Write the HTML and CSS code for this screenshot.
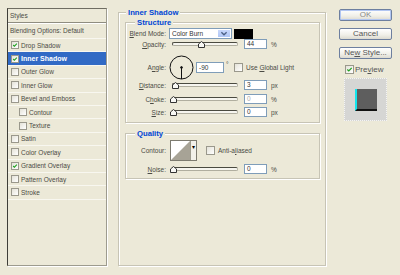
FILE: index.html
```html
<!DOCTYPE html>
<html lang="en">
<head>
  <meta charset="UTF-8">
  <title>Layer Style | Inner Shadow</title>
  <link rel="stylesheet" href="styles.css">
</head>
<body>
  <div class="dialog">
    <!-- 左侧样式列表 -->
    <div class="styles_list">
      <div class="styles_head">Styles</div>
      <div class="styles_blend">Blending Options: Default</div>
      <div class="styles_item"><span class="check on"><svg viewBox="0 0 8 8"><path d="M1.5 4 L3.2 5.6 L6.5 2.2"/></svg></span>Drop Shadow</div>
      <div class="styles_item selected"><span class="check on"><svg viewBox="0 0 8 8"><path d="M1.5 4 L3.2 5.6 L6.5 2.2"/></svg></span>Inner Shadow</div>
      <div class="styles_item"><span class="check"></span>Outer Glow</div>
      <div class="styles_item"><span class="check"></span>Inner Glow</div>
      <div class="styles_item"><span class="check"></span>Bevel and Emboss</div>
      <div class="styles_item sub"><span class="check"></span>Contour</div>
      <div class="styles_item sub"><span class="check"></span>Texture</div>
      <div class="styles_item"><span class="check"></span>Satin</div>
      <div class="styles_item"><span class="check"></span>Color Overlay</div>
      <div class="styles_item"><span class="check on"><svg viewBox="0 0 8 8"><path d="M1.5 4 L3.2 5.6 L6.5 2.2"/></svg></span>Gradient Overlay</div>
      <div class="styles_item"><span class="check"></span>Pattern Overlay</div>
      <div class="styles_item"><span class="check"></span>Stroke</div>
    </div>

    <!-- 中间参数面板 -->
    <div class="effect_panel">
      <div class="group_title">Inner Shadow</div>

      <div class="group structure">
        <div class="group_title sub_title">Structure</div>
        <div class="row row_blend">
          <span class="label"><u>B</u>lend Mode:</span>
          <div class="select">
            <span class="select_text">Color Burn</span>
            <span class="select_btn"><svg viewBox="0 0 10 8"><path d="M2 2.5 L5 5.5 L8 2.5"/></svg></span>
          </div>
          <span class="swatch"></span>
        </div>
        <div class="row">
          <span class="label"><u>O</u>pacity:</span>
          <div class="slider"><span class="thumb" style="left: 44%"><svg viewBox="0 0 7 7"><path d="M0.5 6.5 V3 L3.5 0.5 L6.5 3 V6.5 Z"/></svg></span></div>
          <span class="field">44</span>
          <span class="unit">%</span>
        </div>
        <div class="row row_angle">
          <span class="label">A<u>n</u>gle:</span>
          <svg class="dial" viewBox="0 0 25 25">
            <circle cx="12.5" cy="12.5" r="11.5"/>
            <line x1="12.5" y1="12.5" x2="12.5" y2="24"/>
            <circle class="dial_dot" cx="12.5" cy="12.5" r="0.9"/>
          </svg>
          <span class="field field_angle">-90</span>
          <span class="degree">°</span>
          <span class="check"></span>
          <span class="check_text">Use <u>G</u>lobal Light</span>
        </div>
        <div class="row">
          <span class="label"><u>D</u>istance:</span>
          <div class="slider"><span class="thumb" style="left: 3%"><svg viewBox="0 0 7 7"><path d="M0.5 6.5 V3 L3.5 0.5 L6.5 3 V6.5 Z"/></svg></span></div>
          <span class="field">3</span>
          <span class="unit">px</span>
        </div>
        <div class="row row_choke">
          <span class="label">C<u>h</u>oke:</span>
          <div class="slider"><span class="thumb" style="left: 0%"><svg viewBox="0 0 7 7"><path d="M0.5 6.5 V3 L3.5 0.5 L6.5 3 V6.5 Z"/></svg></span></div>
          <span class="field dim">0</span>
          <span class="unit">%</span>
        </div>
        <div class="row row_size">
          <span class="label"><u>S</u>ize:</span>
          <div class="slider"><span class="thumb" style="left: 0%"><svg viewBox="0 0 7 7"><path d="M0.5 6.5 V3 L3.5 0.5 L6.5 3 V6.5 Z"/></svg></span></div>
          <span class="field">0</span>
          <span class="unit">px</span>
        </div>
      </div>

      <div class="group quality">
        <div class="group_title sub_title">Quality</div>
        <div class="row row_contour">
          <span class="label">Contour:</span>
          <div class="contour">
            <svg class="contour_curve" viewBox="0 0 20 19" preserveAspectRatio="none"><path d="M0 19 L20 0 L20 19 Z"/></svg>
            <span class="contour_btn">▾</span>
          </div>
          <span class="check check_aa"></span>
          <span class="check_text">Anti-a<u>l</u>iased</span>
        </div>
        <div class="row row_noise">
          <span class="label"><u>N</u>oise:</span>
          <div class="slider"><span class="thumb" style="left: 0%"><svg viewBox="0 0 7 7"><path d="M0.5 6.5 V3 L3.5 0.5 L6.5 3 V6.5 Z"/></svg></span></div>
          <span class="field">0</span>
          <span class="unit">%</span>
        </div>
      </div>
    </div>

    <!-- 右侧按钮 -->
    <div class="side">
      <div class="btn btn_default">OK</div>
      <div class="btn">Cancel</div>
      <div class="btn">Ne<u>w</u> Style...</div>
      <div class="preview_row">
        <span class="check on"><svg viewBox="0 0 8 8"><path d="M1.5 4 L3.2 5.6 L6.5 2.2"/></svg></span>
        <span>Pre<u>v</u>iew</span>
      </div>
      <div class="preview_box"><span class="preview_square"></span></div>
    </div>
  </div>
</body>
</html>
```

FILE: styles.css
```css
body {
  margin: 0;
  width: 400px;
  height: 275px;
  overflow: hidden;
  background-color: #ece9d8;
  font-family: "Liberation Sans", Arial, sans-serif;
  font-size: 6.5px;
  color: #4a4a44;
}
u {
  text-decoration-thickness: 0.5px;
  text-underline-offset: 1px;
}
.dialog {
  display: flex;
  align-items: flex-start;
  padding: 8px 0 0 7px;
}

/* 样式列表 */
.styles_list {
  box-sizing: border-box;
  width: 100px;
  height: 258px;
  border: 1px solid;
  border-color: #6f6d62 #9d9b8e #9d9b8e #3f3e38;
  box-shadow: 1px 1px 0 #fff;
}
.styles_head {
  height: 13px;
  line-height: 13px;
  padding-left: 2px;
  border-bottom: 1px solid #8f8d80;
}
.styles_blend {
  height: 14px;
  line-height: 14px;
  padding-left: 2px;
  border-top: 1px solid #fff;
  border-bottom: 1px solid #f8f7f0;
}
.styles_item {
  display: flex;
  align-items: center;
  height: 12.4px;
  padding-left: 3px;
  border-bottom: 1px solid #f8f7f0;
}
.styles_item.sub {
  padding-left: 11px;
}
.styles_item.selected {
  background-color: #316ac5;
  color: #fff;
  font-weight: bold;
  font-size: 7px;
}

/* 复选框 */
.check {
  box-sizing: border-box;
  display: inline-flex;
  flex: none;
  width: 8px;
  height: 8px;
  margin-right: 2px;
  border: 1px solid #9a988c;
  background: linear-gradient(135deg, #e4e2d8, #fff);
}
.check svg {
  width: 100%;
  height: 100%;
}
.check svg path {
  fill: none;
  stroke: #21a121;
  stroke-width: 1.4;
}

/* 参数面板 */
.effect_panel {
  box-sizing: border-box;
  width: 208px;
  height: 254px;
  margin: 4px 0 0 11px;
  padding: 0 5px 0 6px;
  border: 1px solid #c7c4b5;
  box-shadow: inset 1px 1px 0 #fff, 1px 1px 0 #fff;
}
.group_title {
  width: max-content;
  height: 9px;
  line-height: 9px;
  margin: -5px 0 0 1px;
  padding: 0 2px;
  background-color: #ece9d8;
  color: #0046d5;
  font-weight: bold;
  font-size: 7.7px;
}
.sub_title {
  margin-left: 9px;
}
.group {
  box-sizing: border-box;
  width: 195px;
  border: 1px solid #c7c4b5;
  box-shadow: inset 1px 1px 0 #fff, 1px 1px 0 #fff;
}
.structure {
  height: 101px;
  margin-top: 5px;
}
.quality {
  height: 46px;
  margin-top: 10px;
}
.row {
  display: flex;
  align-items: center;
  height: 10px;
}
.row_blend {
  height: 11px;
  margin-top: 1px;
}
.row_angle {
  height: 25px;
  margin-top: 6px;
}
.row_choke {
  margin-top: 4px;
}
.row_size {
  margin-top: 3px;
}
.row_contour {
  height: 21px;
  margin-top: 2px;
}
.row_noise {
  margin-top: 3px;
}
.label {
  flex: none;
  width: 40px;
  text-align: right;
}

/* 下拉框 */
.select {
  box-sizing: border-box;
  display: flex;
  width: 63px;
  height: 11px;
  margin-left: 3px;
  border: 1px solid #7f9db9;
  background-color: #fff;
}
.select_text {
  flex: 1;
  padding-left: 2px;
  line-height: 9px;
  color: #333;
}
.select_btn {
  width: 12px;
  border: 1px solid #fff;
  border-radius: 1px;
  background: linear-gradient(#c8d8fb, #b0c6f5);
}
.select_btn svg {
  display: block;
  width: 100%;
  height: 100%;
}
.select_btn path {
  fill: none;
  stroke: #4d6185;
  stroke-width: 1.5;
}
.swatch {
  width: 19px;
  height: 10px;
  margin-left: 2px;
  background-color: #000;
}

/* 滑块 */
.slider {
  position: relative;
  box-sizing: border-box;
  width: 66px;
  height: 4px;
  margin: 0 0 1px 6px;
  border: 1px solid;
  border-color: #4a4a40 #b0ae9f #b0ae9f #4a4a40;
  border-radius: 2px;
  background-color: #f6f5ef;
}
.thumb {
  position: absolute;
  top: -2px;
  width: 7px;
  height: 7px;
  margin-left: -3px;
}
.thumb svg {
  display: block;
  width: 7px;
  height: 7px;
}
.thumb path {
  fill: #f8f8f4;
  stroke: #333;
  stroke-width: 1;
}
.field {
  box-sizing: border-box;
  width: 23px;
  height: 10px;
  margin-left: 6px;
  padding-left: 2px;
  line-height: 8px;
  border: 1px solid #7f9db9;
  background-color: #fff;
  color: #333;
}
.field.dim {
  color: #aaa;
}
.unit {
  margin-left: 4px;
}

/* 角度 */
.dial {
  width: 25px;
  height: 25px;
  margin-left: 3px;
}
.dial circle,
.dial line {
  fill: none;
  stroke: #111;
  stroke-width: 1;
}
.dial .dial_dot {
  fill: #111;
}
.field_angle {
  width: 28px;
  height: 11px;
  margin-left: 2px;
  line-height: 9px;
}
.degree {
  align-self: flex-start;
  width: 4px;
  margin: 6px 0 0 2px;
}
.row_angle .check {
  width: 9px;
  height: 9px;
  margin-left: 4px;
}
.check_text {
  margin-left: 1px;
}

/* 等高线 */
.contour {
  box-sizing: border-box;
  display: flex;
  width: 27px;
  height: 21px;
  margin-left: 4px;
  border: 1px solid #7d7b70;
  background-color: #fff;
}
.contour_curve {
  width: 19px;
  height: 19px;
}
.contour_curve path {
  fill: #a7a396;
}
.contour_btn {
  flex: 1;
  border-left: 1px solid #9d9b8e;
  background-color: #f2f1ea;
  font-size: 6px;
  line-height: 13px;
  text-align: center;
  color: #000;
}
.check_aa {
  width: 9px;
  height: 9px;
  margin-left: 9px;
}

/* 按钮 */
.side {
  display: flex;
  flex-direction: column;
  width: 53px;
  margin-left: 13px;
  font-size: 8px;
  color: #555;
}
.btn {
  box-sizing: border-box;
  height: 12px;
  margin-top: 7px;
  line-height: 10px;
  text-align: center;
  border: 1px solid #6d7f9f;
  border-radius: 2px;
  background: linear-gradient(#fff, #f0efe8 60%, #dcdad0);
}
.btn_default {
  margin-top: 1px;
  box-shadow: inset 0 0 0 1px #b2c6f2;
  color: #888;
}
.preview_row {
  display: flex;
  align-items: center;
  height: 10px;
  margin: 5px 0 0 6px;
}
.preview_row .check {
  width: 9px;
  height: 9px;
  margin-right: 1px;
}
.preview_box {
  box-sizing: border-box;
  display: flex;
  align-items: center;
  justify-content: center;
  width: 43px;
  height: 43px;
  margin: 4px 0 0 5px;
  border: 1px dotted #f4f4f4;
  background-color: #d6d6d4;
}
.preview_square {
  box-sizing: border-box;
  width: 22px;
  height: 22px;
  border-left: 2px solid #12e6ee;
  border-bottom: 2px solid #111;
  background-color: #5e5e5e;
}
```
